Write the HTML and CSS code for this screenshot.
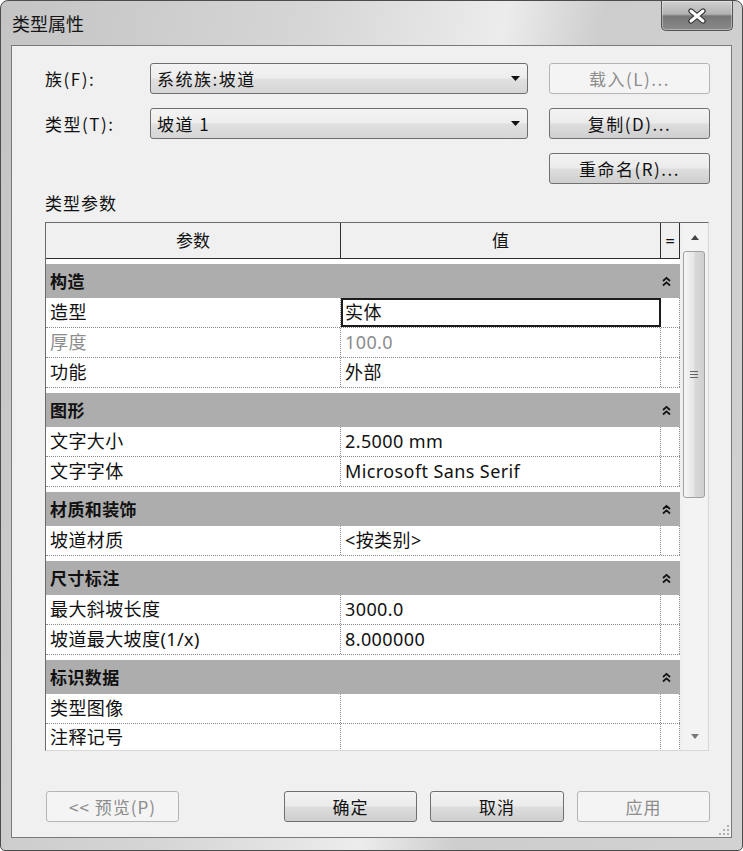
FILE: index.html
```html
<!DOCTYPE html>
<html lang="zh">
<head>
<meta charset="utf-8">
<title>类型属性</title>
<link rel="stylesheet" href="styles.css">
</head>
<body>
<div class="window">
  <div class="titlebar">
    <span class="title">类型属性</span>
    <div class="close">
      <svg width="20" height="16" viewBox="0 0 20 16">
        <path d="M4 3 L16 13 M16 3 L4 13" stroke="#353535" stroke-width="5.4" stroke-linecap="round" fill="none"/>
        <path d="M4 3 L16 13 M16 3 L4 13" stroke="#ffffff" stroke-width="3" stroke-linecap="round" fill="none"/>
      </svg>
    </div>
  </div>
  <div class="client">
    <div class="top-grid">
      <span class="lbl">族(F):</span>
      <div class="combo"><span>系统族:坡道</span><svg class="darrow" width="9" height="5" viewBox="0 0 9 5"><path d="M0 0 H9 L4.5 5 Z" fill="#111"/></svg></div>
      <div class="btn disabled">载入(L)...</div>
      <span class="lbl">类型(T):</span>
      <div class="combo"><span>坡道 1</span><svg class="darrow" width="9" height="5" viewBox="0 0 9 5"><path d="M0 0 H9 L4.5 5 Z" fill="#111"/></svg></div>
      <div class="btn">复制(D)...</div>
      <span></span>
      <span></span>
      <div class="btn">重命名(R)...</div>
    </div>
    <div class="section-label">类型参数</div>
    <div class="table">
      <div class="grid">
        <div class="hdr">
          <div class="hc">参数</div>
          <div class="hc">值</div>
          <div class="hc eq">=</div>
        </div>

        <div class="grp"><span class="gt">构造</span><span></span><svg class="chev" width="9" height="11" viewBox="0 0 9 11"><path d="M1 5 L4.5 1.8 L8 5 M1 9.5 L4.5 6.3 L8 9.5" stroke="#111" stroke-width="1.7" fill="none"/></svg></div>
        <div class="row"><div class="c">造型</div><div class="c selected">实体</div><div class="c"></div></div>
        <div class="row dim"><div class="c">厚度</div><div class="c">100.0</div><div class="c"></div></div>
        <div class="row"><div class="c">功能</div><div class="c">外部</div><div class="c"></div></div>

        <div class="grp"><span class="gt">图形</span><span></span><svg class="chev" width="9" height="11" viewBox="0 0 9 11"><path d="M1 5 L4.5 1.8 L8 5 M1 9.5 L4.5 6.3 L8 9.5" stroke="#111" stroke-width="1.7" fill="none"/></svg></div>
        <div class="row"><div class="c">文字大小</div><div class="c">2.5000 mm</div><div class="c"></div></div>
        <div class="row"><div class="c">文字字体</div><div class="c">Microsoft Sans Serif</div><div class="c"></div></div>

        <div class="grp"><span class="gt">材质和装饰</span><span></span><svg class="chev" width="9" height="11" viewBox="0 0 9 11"><path d="M1 5 L4.5 1.8 L8 5 M1 9.5 L4.5 6.3 L8 9.5" stroke="#111" stroke-width="1.7" fill="none"/></svg></div>
        <div class="row"><div class="c">坡道材质</div><div class="c">&lt;按类别&gt;</div><div class="c"></div></div>

        <div class="grp"><span class="gt">尺寸标注</span><span></span><svg class="chev" width="9" height="11" viewBox="0 0 9 11"><path d="M1 5 L4.5 1.8 L8 5 M1 9.5 L4.5 6.3 L8 9.5" stroke="#111" stroke-width="1.7" fill="none"/></svg></div>
        <div class="row"><div class="c">最大斜坡长度</div><div class="c">3000.0</div><div class="c"></div></div>
        <div class="row"><div class="c">坡道最大坡度(1/x)</div><div class="c">8.000000</div><div class="c"></div></div>

        <div class="grp"><span class="gt">标识数据</span><span></span><svg class="chev" width="9" height="11" viewBox="0 0 9 11"><path d="M1 5 L4.5 1.8 L8 5 M1 9.5 L4.5 6.3 L8 9.5" stroke="#111" stroke-width="1.7" fill="none"/></svg></div>
        <div class="row"><div class="c">类型图像</div><div class="c"></div><div class="c"></div></div>
        <div class="row last"><div class="c">注释记号</div><div class="c"></div><div class="c"></div></div>
      </div>
      <div class="scrollbar">
        <div class="sb-btn"><svg width="8" height="5" viewBox="0 0 8 5"><path d="M0 5 L4 0 L8 5 Z" fill="#444"/></svg></div>
        <div class="sb-track">
          <div class="thumb">
            <svg width="8" height="7" viewBox="0 0 8 7"><path d="M0 0.5 H8 M0 3.5 H8 M0 6.5 H8" stroke="#666" stroke-width="1"/></svg>
          </div>
        </div>
        <div class="sb-btn"><svg width="8" height="5" viewBox="0 0 8 5"><path d="M0 0 L8 0 L4 5 Z" fill="#777"/></svg></div>
      </div>
    </div>
    <div class="footer">
      <div class="btn wide disabled">&lt;&lt; 预览(P)</div>
      <div class="btn-group">
        <div class="btn wide">确定</div>
        <div class="btn wide w134">取消</div>
        <div class="btn wide disabled">应用</div>
      </div>
    </div>
    <svg class="grip" width="12" height="12" viewBox="0 0 12 12">
      <g fill="#b0b0b0">
        <rect x="9" y="1" width="2" height="2"/>
        <rect x="5" y="5" width="2" height="2"/><rect x="9" y="5" width="2" height="2"/>
        <rect x="1" y="9" width="2" height="2"/><rect x="5" y="9" width="2" height="2"/><rect x="9" y="9" width="2" height="2"/>
      </g>
    </svg>
  </div>
</div>
</body>
</html>
```

FILE: styles.css
```css
* { box-sizing: border-box; }
html, body { margin: 0; padding: 0; }
body {
  width: 743px;
  height: 851px;
  overflow: hidden;
  background: #ffffff;
  font-family: "Noto Sans CJK SC", "Noto Sans", sans-serif;
  color: #111;
}

.window {
  width: 743px;
  height: 851px;
  border: 1px solid #4c4c4c;
  border-radius: 8px 8px 5px 5px;
  background: linear-gradient(100deg, #c4c4c4 0%, #d6d6d6 35%, #ececec 57%, #cdcdcd 68%, #d2d2d2 100%);
  display: flex;
  flex-direction: column;
  overflow: hidden;
}

.titlebar {
  height: 44px;
  flex-shrink: 0;
  display: flex;
  justify-content: space-between;
  align-items: flex-start;
}
.title {
  margin: 10px 0 0 11px;
  font-size: 18px;
  line-height: 24px;
  color: #141414;
}
.close {
  width: 72px;
  height: 30px;
  margin-right: 9px;
  border: 1px solid #555;
  border-top: none;
  border-radius: 0 0 5px 5px;
  background: linear-gradient(#d0d0d0 0%, #b2b2b2 45%, #767676 52%, #8a8a8a 100%);
  display: flex;
  align-items: center;
  justify-content: center;
  box-shadow: inset 0 0 0 1px rgba(255,255,255,0.35);
}

.client {
  margin: 0 10px 12px 10px;
  height: 793px;
  border: 1px solid #7a7a7a;
  background: #f0f0f0;
  padding: 17px 21px 0 33px;
  display: flex;
  flex-direction: column;
  position: relative;
}

.top-grid {
  display: grid;
  grid-template-columns: 84px 378px 161px;
  column-gap: 21px;
  grid-auto-rows: 31px;
  row-gap: 14px;
}
.lbl {
  align-self: center;
  font-size: 17px;
  line-height: 22px;
  letter-spacing: 1.5px;
  white-space: nowrap;
}
.combo {
  display: flex;
  align-items: center;
  justify-content: space-between;
  padding: 0 7px 0 6px;
  border: 1px solid #6e6e6e;
  border-radius: 3px;
  background: linear-gradient(#f4f4f4 0%, #ededed 48%, #e0e0e0 52%, #d6d6d6 100%);
  font-size: 17px;
  line-height: 22px;
  letter-spacing: 1.5px;
}
.btn {
  display: flex;
  align-items: center;
  justify-content: center;
  border: 1px solid #707070;
  border-radius: 3px;
  background: linear-gradient(#f3f3f3 0%, #ebebeb 48%, #dddddd 52%, #cfcfcf 100%);
  font-size: 17px;
  line-height: 22px;
  letter-spacing: 1.5px;
  color: #111;
  white-space: nowrap;
}
.btn.disabled {
  border-color: #b2b6b8;
  background: #f4f4f4;
  color: #8c8c8c;
}

.section-label {
  margin-top: 8px;
  font-size: 17px;
  line-height: 22px;
  letter-spacing: 1px;
}

.table {
  margin-top: 8px;
  width: 664px;
  height: 529px;
  border: 1px solid;
  border-color: #6a6a6a #d8d8d8 #d8d8d8 #6a6a6a;
  display: flex;
  background: #f0f0f0;
}
.grid {
  width: 634px;
  flex-shrink: 0;
  overflow: hidden;
  background: #ffffff;
  font-family: "Noto Sans", "Noto Sans CJK SC", sans-serif;
  font-size: 18px;
  letter-spacing: 0.4px;
}
.hdr {
  height: 36px;
  display: grid;
  grid-template-columns: 295px 320px 19px;
  background: #f0f0f0;
}
.hc {
  border-right: 1px solid #2e2e2e;
  border-bottom: 1px solid #2e2e2e;
  display: flex;
  align-items: center;
  justify-content: center;
  line-height: 22px;
  font-size: 17px;
  letter-spacing: 0;
}

.grp {
  height: 39px;
  border-top: 5px solid #ffffff;
  background: #adadad;
  display: grid;
  grid-template-columns: 295px 320px 19px;
  align-items: center;
  font-weight: bold;
}
.gt {
  padding-left: 4px;
  line-height: 22px;
  font-family: "Noto Sans CJK SC", sans-serif;
  font-size: 17px;
}
.chev { margin-left: 1px; }

.row {
  height: 30px;
  display: grid;
  grid-template-columns: 295px 320px 19px;
  border-bottom: 1px dotted #8a8a8a;
}
.c {
  padding-left: 4px;
  line-height: 29px;
  border-right: 1px dotted #8a8a8a;
  white-space: nowrap;
  overflow: hidden;
}
.c.selected {
  border: 2px solid #1c1c1c;
  line-height: 25px;
  padding-left: 2px;
}
.row.dim .c { color: #8c8c8c; }
.row.last { height: 27px; border-bottom: none; }
.row.last .c { line-height: 27px; }

.scrollbar {
  width: 24px;
  margin-left: 3px;
  display: flex;
  flex-direction: column;
  background: #f3f3f3;
}
.sb-btn {
  height: 28px;
  display: flex;
  align-items: center;
  justify-content: center;
  flex-shrink: 0;
}
.sb-track { flex: 1; }
.thumb {
  height: 247px;
  margin: 0 2px 0 0;
  border: 1px solid #a0a0a0;
  border-radius: 3px;
  background: linear-gradient(90deg, #f6f6f6 0%, #e6e6e6 50%, #d8d8d8 55%, #d0d0d0 100%);
  display: flex;
  align-items: center;
  justify-content: center;
}

.footer {
  margin-top: 40px;
  height: 31px;
  display: flex;
  justify-content: space-between;
  padding-left: 1px;
}
.btn.wide { width: 133px; height: 31px; letter-spacing: 1px; }
.btn.w134 { width: 134px; }
.btn-group { display: flex; gap: 13px; }

.grip {
  position: absolute;
  right: 1px;
  bottom: 1px;
}
```
